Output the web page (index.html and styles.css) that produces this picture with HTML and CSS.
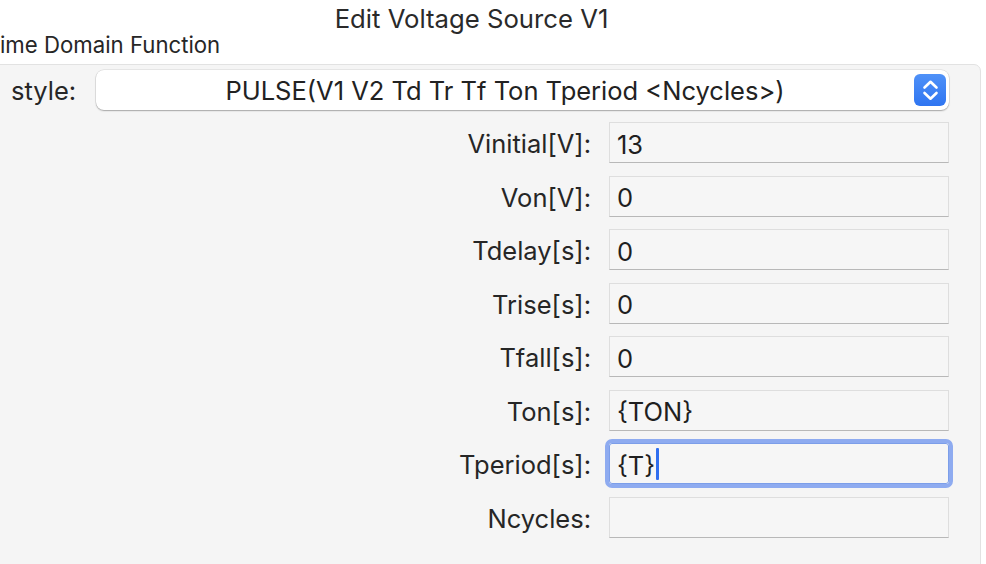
FILE: index.html
```html
<!DOCTYPE html>
<html>
<head>
<meta charset="utf-8">
<link rel="stylesheet" href="styles.css">
</head>
<body>
<div class="window">
  <div class="titlebar">Edit Voltage Source V1</div>
  <div class="group-title">ime Domain Function</div>
  <div class="panel">
    <div class="style-row">
      <span class="style-label">style:</span>
      <div class="select">
        <span class="select-text">PULSE(V1 V2 Td Tr Tf Ton Tperiod &lt;Ncycles&gt;)</span>
        <span class="stepper">
          <svg width="32" height="32" viewBox="0 0 32 32">
            <path d="M10.5 13.5 L16.5 7.8 L22.5 13.5" fill="none" stroke="#fff" stroke-width="2.6" stroke-linecap="round" stroke-linejoin="round"/>
            <path d="M10.5 19 L16.5 24.7 L22.5 19" fill="none" stroke="#fff" stroke-width="2.6" stroke-linecap="round" stroke-linejoin="round"/>
          </svg>
        </span>
      </div>
    </div>
    <div class="fields">
      <span class="field-label">Vinitial[V]:</span><div class="input">13</div>
      <span class="field-label">Von[V]:</span><div class="input">0</div>
      <span class="field-label">Tdelay[s]:</span><div class="input">0</div>
      <span class="field-label">Trise[s]:</span><div class="input">0</div>
      <span class="field-label">Tfall[s]:</span><div class="input">0</div>
      <span class="field-label">Ton[s]:</span><div class="input">{TON}</div>
      <span class="field-label">Tperiod[s]:</span><div class="input focused">{T}<span class="caret"></span></div>
      <span class="field-label">Ncycles:</span><div class="input"></div>
    </div>
  </div>
</div>
</body>
</html>
```

FILE: styles.css
```css
html, body {
  margin: 0;
  padding: 0;
  background: #ffffff;
}
body {
  width: 986px;
  height: 564px;
  overflow: hidden;
  font-family: Inter, "Liberation Sans", sans-serif;
  color: #262626;
}
.window {
  display: flex;
  flex-direction: column;
}
.titlebar {
  height: 32px;
  padding-top: 4px;
  box-sizing: border-box;
  padding-right: 43px;
  text-align: center;
  font-size: 25.7px;
  line-height: 29px;
  color: #2a2a2a;
}
.group-title {
  font-size: 22.2px;
  line-height: 25px;
  height: 25px;
}
.panel {
  margin-top: 7px;
  margin-left: -1px;
  width: 982px;
  box-sizing: border-box;
  min-height: 520px;
  background: #f5f5f5;
  border: 1px solid #e2e2e2;
  border-radius: 0 7px 0 0;
  padding: 5px 31px 0 0;
}
.style-row {
  display: flex;
  align-items: center;
  height: 40px;
}
.style-label {
  width: 96px;
  padding-left: 11px;
  box-sizing: border-box;
  font-size: 25.5px;
}
.select {
  flex: 1;
  height: 40px;
  background: #ffffff;
  border-radius: 8px;
  box-shadow: 0 0 0 0.5px rgba(0,0,0,0.12), 0 1px 1.5px rgba(0,0,0,0.28);
  display: flex;
  align-items: center;
}
.select-text {
  flex: 1;
  text-align: center;
  font-size: 25.5px;
  color: #222;
}
.stepper {
  width: 32px;
  height: 32px;
  margin-right: 3px;
  border-radius: 6px;
  background: linear-gradient(#4f91f8, #2f75f1);
  display: flex;
}
.fields {
  margin-top: 12px;
  display: grid;
  grid-template-columns: 1fr 340px;
  column-gap: 18px;
  row-gap: 12.57px;
  grid-auto-rows: 41px;
}
.field-label {
  align-self: center;
  text-align: right;
  font-size: 25.5px;
  padding-top: 2px;
  color: #262626;
}
.input {
  box-sizing: border-box;
  height: 41px;
  background: #f6f6f6;
  border: 1px solid #dedede;
  border-bottom-color: #b8b8b8;
  padding-left: 7px;
  padding-top: 3px;
  font-size: 25.5px;
  color: #1f1f1f;
  display: flex;
  align-items: center;
}
.input.focused {
  border: 1px solid #7c9ee9;
  border-radius: 3px;
  outline: 4px solid #8eabf0;
  outline-offset: 0;
}
.caret {
  display: inline-block;
  width: 3px;
  height: 32px;
  margin-left: 1px;
  margin-top: -3px;
  background: #2f6ff0;
  border-radius: 1px;
}
```
